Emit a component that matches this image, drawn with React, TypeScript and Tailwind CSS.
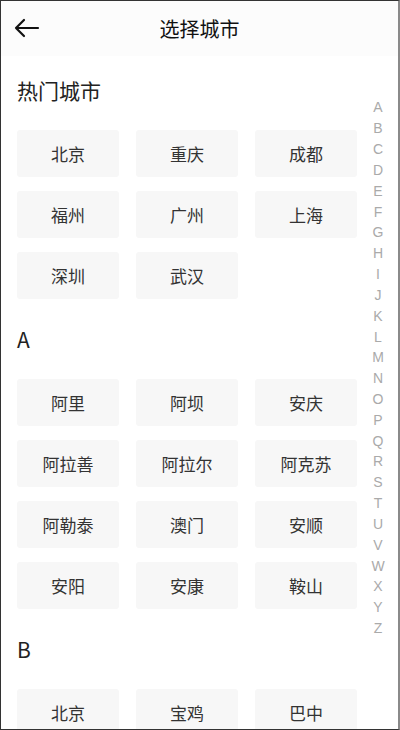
import type { ReactNode } from "react";

const HOT = ["北京", "重庆", "成都", "福州", "广州", "上海", "深圳", "武汉"];

const SECTIONS = [
  {
    key: "A",
    cities: ["阿里", "阿坝", "安庆", "阿拉善", "阿拉尔", "阿克苏", "阿勒泰", "澳门", "安顺", "安阳", "安康", "鞍山"],
  },
  { key: "B", cities: ["北京", "宝鸡", "巴中", "白山", "包头", "北海"] },
];

const LETTERS = "ABCDEFGHIJKLMNOPQRSTUVWXYZ".split("");

function Section({ title, cities, first }: { title: ReactNode; cities: string[]; first?: boolean }) {
  return (
    <section className={first ? "pt-[15px]" : "pt-[21px]"}>
      <h2 className="flex h-10 items-center pl-4 text-[21px] text-[#222]">{title}</h2>
      <div className="mt-[19px] grid w-[356px] grid-cols-3 gap-x-[17px] gap-y-[14px] pl-4">
        {cities.map((c, i) => (
          <button
            key={c + i}
            className="flex h-[47px] items-center justify-center rounded-[3px] bg-[#f7f7f7] text-[17px] text-[#333]"
          >
            {c}
          </button>
        ))}
      </div>
    </section>
  );
}

export default function App() {
  return (
    <div
      className="relative h-[730px] w-[400px] overflow-hidden border-t border-l border-b border-[#333] border-r-2 border-r-[#8a8a8a] bg-white"
      style={{ fontFamily: '"Noto Sans CJK SC", "Noto Sans", sans-serif' }}
    >
      <header className="relative flex h-[55px] items-center justify-center bg-[#fcfcfc]">
        <svg
          className="absolute left-[12px] top-[16px]"
          width="28"
          height="22"
          viewBox="0 0 28 22"
          fill="none"
          stroke="#111"
          strokeWidth="2.2"
          strokeLinecap="round"
          strokeLinejoin="round"
        >
          <path d="M25 11H3M11 3L3 11l8 8" />
        </svg>
        <h1 className="text-[20px] font-normal text-[#111]">选择城市</h1>
      </header>

      <Section title="热门城市" cities={HOT} first />
      {SECTIONS.map((s) => (
        <Section key={s.key} title={s.key} cities={s.cities} />
      ))}

      <nav
        className="absolute right-[11px] top-[96px] flex w-[18px] flex-col items-center text-[14px] text-[#aaa]"
        style={{ fontFamily: '"Liberation Sans", Arial, sans-serif' }}
      >
        {LETTERS.map((l) => (
          <span key={l} className="flex h-[20.84px] items-center leading-none">
            {l}
          </span>
        ))}
      </nav>
    </div>
  );
}
